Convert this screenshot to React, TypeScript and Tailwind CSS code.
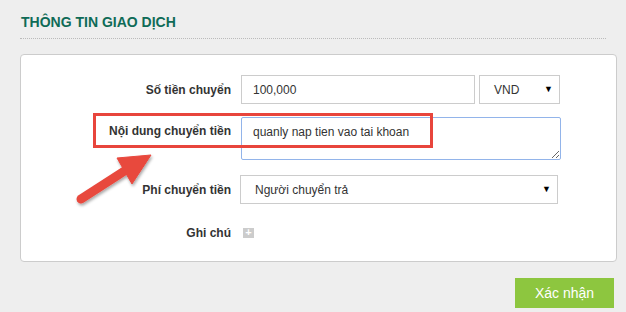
import React from 'react';

const font = { fontFamily: '"Liberation Sans", Arial, sans-serif' };

function Label({ children, top }: { children: React.ReactNode; top?: boolean }) {
  return (
    <div
      className={`text-right text-[12px] font-bold text-[#333] leading-[16px] ${top ? 'pt-[6px]' : 'self-center'}`}
    >
      {children}
    </div>
  );
}

function FakeSelect({ value, className }: { value: string; className: string }) {
  return (
    <div
      className={`h-[29px] border border-[#ccc] bg-white flex items-center justify-between pl-[14px] pr-[6px] text-[12px] text-[#333] ${className}`}
    >
      <span>{value}</span>
      <span className="text-[9px] text-black">▼</span>
    </div>
  );
}

function Arrow() {
  return (
    <svg
      className="absolute left-[60px] top-[140px] pointer-events-none"
      width="110"
      height="75"
      viewBox="0 0 110 75"
    >
      <defs>
        <filter id="sh" x="-20%" y="-20%" width="150%" height="150%">
          <feDropShadow dx="1" dy="2" stdDeviation="1.5" floodColor="#000" floodOpacity="0.35" />
        </filter>
      </defs>
      <g filter="url(#sh)" fill="#e8483e" stroke="#e8483e">
        <line x1="21" y1="59" x2="66" y2="30" strokeWidth="9" strokeLinecap="round" />
        <polygon points="91,15 57,18 72,44" strokeWidth="1" strokeLinejoin="round" />
      </g>
    </svg>
  );
}

export default function App() {
  return (
    <div className="relative w-[626px] h-[312px] bg-[#eeeeee] overflow-hidden" style={font}>
      <div className="pl-[20px] pt-[14px]">
        <div className="w-[586px] border-b border-dotted border-[#bbb] pb-[8px] pl-[1px]">
          <h2 className="text-[14px] font-bold leading-[16px] text-[#0f6b57]">THÔNG TIN GIAO DỊCH</h2>
        </div>

        <div className="relative mt-[15px] w-[597px] bg-white border border-[#ccc] rounded-[4px] pt-[20px] pb-[14px]">
          <div className="grid grid-cols-[210px_320px] gap-x-[10px]">
            <Label>Số tiền chuyển</Label>
            <div className="flex gap-[4px]">
              <div className="w-[234px] h-[29px] border border-[#ccc] flex items-center px-[11px] text-[12px] text-[#333]">
                100,000
              </div>
              <FakeSelect value="VND" className="w-[81px]" />
            </div>

            <div className="col-span-2 h-[13px]" />

            <Label top>Nội dung chuyển tiền</Label>
            <textarea
              readOnly
              defaultValue="quanly nap tien vao tai khoan"
              className="block w-[320px] h-[43px] border border-[#92b4ea] rounded-[2px] px-[11px] pt-[6px] text-[12px] leading-[16px] text-[#333] outline-none"
              style={font}
            />

            <div className="col-span-2 h-[15px]" />

            <Label>Phí chuyển tiền</Label>
            <FakeSelect value="Người chuyển trả" className="w-[318px] -ml-px" />

            <div className="col-span-2 h-[14px]" />

            <Label>Ghi chú</Label>
            <div className="h-[29px] flex items-center">
              <span className="ml-[2px] w-[11px] h-[10px] bg-[#cccccc] flex items-center justify-center text-white text-[11px] leading-none font-bold">
                +
              </span>
            </div>
          </div>

          <div className="absolute left-[72px] top-[58px] w-[340px] h-[35px] border-[3px] border-[#e8453c] pointer-events-none" />
        </div>

        <div className="w-[597px] flex justify-end pr-[3px] mt-[16px]">
          <button className="w-[99px] h-[30px] bg-[#8dc63f] text-white text-[14px]">Xác nhận</button>
        </div>
      </div>
      <Arrow />
    </div>
  );
}
